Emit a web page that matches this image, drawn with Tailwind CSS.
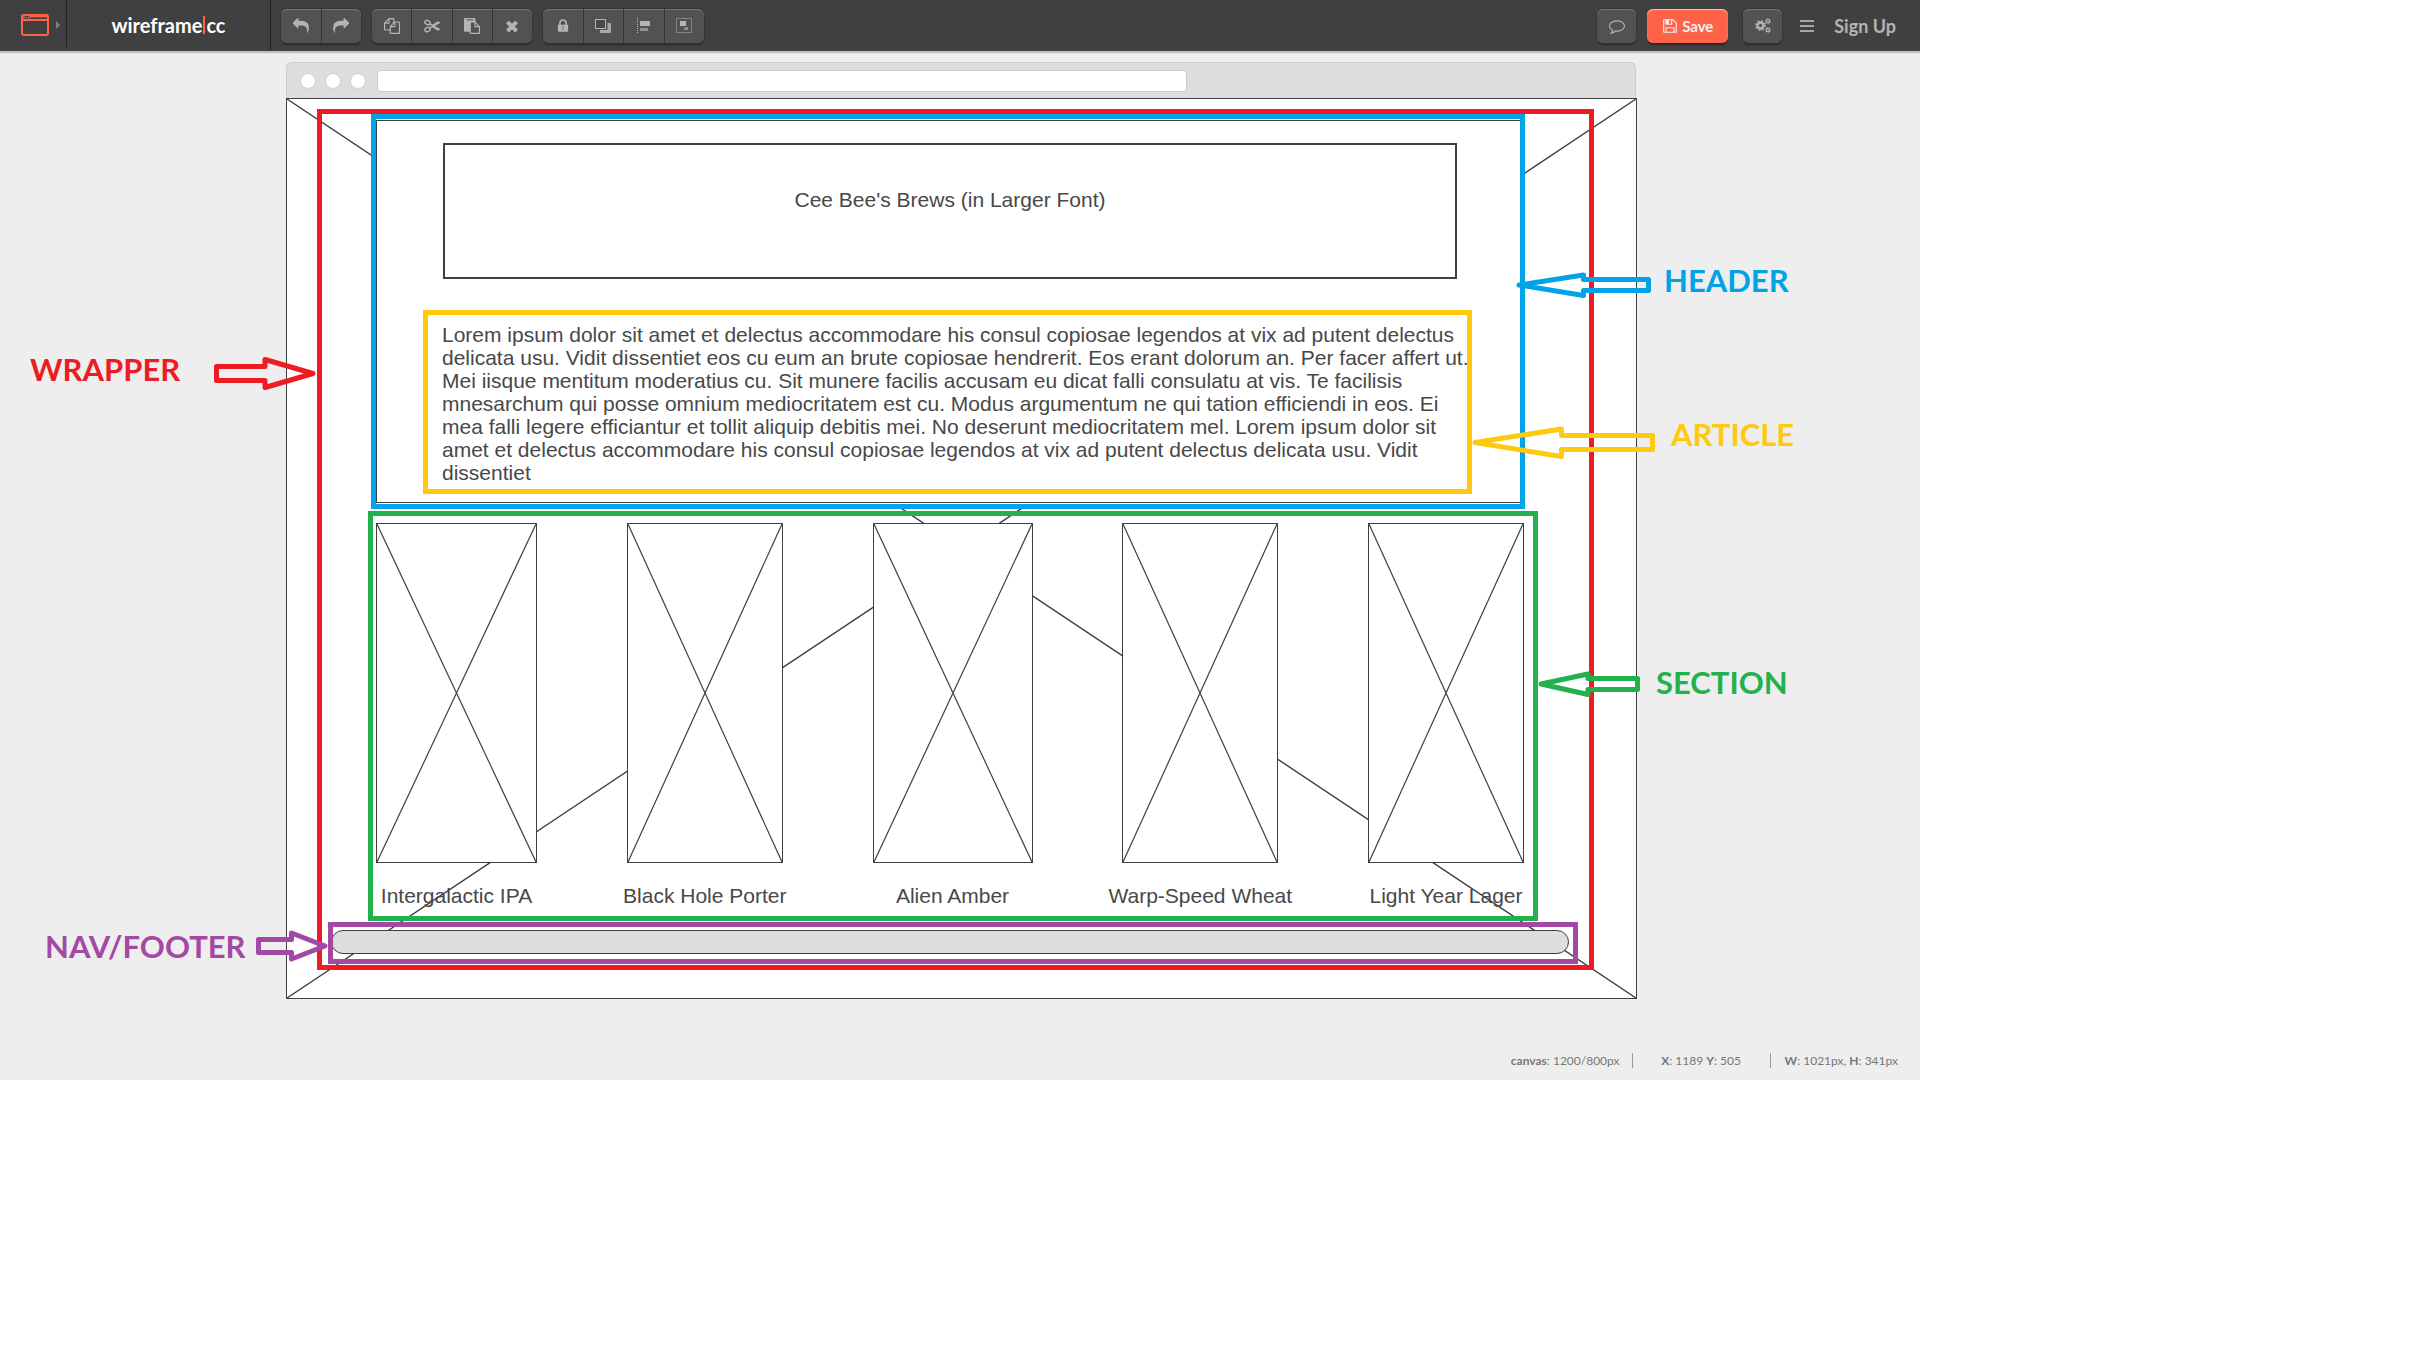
<!DOCTYPE html>
<html lang="en">
<head>
<meta charset="utf-8">
<meta name="viewport" content="width=device-width, initial-scale=1">
<title>wireframe|cc</title>
<script src="https://cdn.jsdelivr.net/npm/@tailwindcss/browser@4"></script>
</head>
<body class="bg-white font-['Lato',sans-serif]">
<div class="w-full max-w-[1920px] overflow-hidden bg-[#eeeeee] pb-3">

  <header class="flex h-[51px] items-start bg-[#404040] pr-6 shadow-[0_2px_1px_#c0c0c0]">
    <button type="button" aria-label="Canvas type" class="flex h-[47px] w-[67px] items-center gap-[7px] border-r border-[#222] pt-[3px] pl-[21px]">
      <svg class="h-[22px] w-[28px]" viewBox="0 0 28 22" fill="none" stroke="#ff6347" stroke-width="2"><rect x="1" y="1" width="26" height="20" rx="2"/><path d="M1 6h26"/><path d="M2 3.500h2M5 3.500h1M7 3.500h2" stroke-width="1.500"/><path d="M9 2.500h18" stroke-width="1.500"/></svg>
      <svg class="h-2 w-1" viewBox="0 0 4 8" fill="#808080"><path d="M0 0l4 4-4 4z"/></svg>
    </button>
    <a href="#" class="flex h-[50px] w-[204px] items-center justify-center border-r border-[#222] text-[20px] leading-[22px] font-bold text-white">wireframe<span class="mx-px h-[18px] w-[2px] bg-[#ff6347]"></span>cc</a>

    <div class="mt-[9px] ml-[10px] flex h-[34px] w-[80px] divide-x divide-[#333] rounded-md bg-[#525252] text-[#b4b4b4] shadow-[inset_0_1px_0_#777,0_0_0_1px_#363636,0_2px_1px_#292929]">
      <button type="button" aria-label="Undo" class="flex flex-1 items-center justify-center"><svg class="h-4 w-4" viewBox="0 0 1792 1792" fill="currentColor"><path d="M1792 1120q0 166-127 451-3 7-10.500 24t-13.500 30-13 22q-12 17-28 17-15 0-23.500-10t-8.500-25q0-9 2.500-26.500t2.500-23.500q5-68 5-123 0-112-19.500-200.500t-54-153.500-89-112-117.500-79.500-140-49-156-23-171-7.500h-224v256q0 26-19 45t-45 19-45-19l-512-512q-19-19-19-45t19-45l512-512q19-19 45-19t45 19 19 45v256h224q713 0 875 403 53 134 53 333z"/></svg></button>
      <button type="button" aria-label="Redo" class="flex flex-1 items-center justify-center"><svg class="h-4 w-4" viewBox="0 0 1792 1792" fill="currentColor"><path transform="matrix(-1 0 0 1 1792 0)" d="M1792 1120q0 166-127 451-3 7-10.500 24t-13.500 30-13 22q-12 17-28 17-15 0-23.500-10t-8.500-25q0-9 2.500-26.500t2.500-23.500q5-68 5-123 0-112-19.500-200.500t-54-153.500-89-112-117.500-79.500-140-49-156-23-171-7.500h-224v256q0 26-19 45t-45 19-45-19l-512-512q-19-19-19-45t19-45l512-512q19-19 45-19t45 19 19 45v256h224q713 0 875 403 53 134 53 333z"/></svg></button>
    </div>

    <div class="mt-[9px] ml-[11px] flex h-[34px] w-[160px] divide-x divide-[#333] rounded-md bg-[#525252] text-[#b4b4b4] shadow-[inset_0_1px_0_#777,0_0_0_1px_#363636,0_2px_1px_#292929]">
      <button type="button" aria-label="Copy" class="flex flex-1 items-center justify-center"><svg class="h-4 w-4" viewBox="0 0 1792 1792" fill="currentColor"><path d="M1696 384q40 0 68 28t28 68v1216q0 40-28 68t-68 28h-960q-40 0-68-28t-28-68v-288h-544q-40 0-68-28t-28-68v-672q0-40 20-88t48-76l408-408q28-28 76-48t88-20h416q40 0 68 28t28 68v328q68-40 128-40h416zm-544 213l-299 299h299v-299zm-640-384l-299 299h299v-299zm196 647l316-316v-416h-384v416q0 40-28 68t-68 28h-416v640h512v-256q0-40 20-88t48-76zm956 804v-1152h-384v416q0 40-28 68t-68 28h-416v640h896z"/></svg></button>
      <button type="button" aria-label="Cut" class="flex flex-1 items-center justify-center"><svg class="h-4 w-4" viewBox="0 0 16 16" fill="none" stroke="currentColor" stroke-width="1.500"><ellipse cx="3.500" cy="4.500" rx="2.700" ry="2" transform="rotate(25 3.500 4.500)"/><ellipse cx="3.500" cy="11.500" rx="2.700" ry="2" transform="rotate(-25 3.500 11.500)"/><path d="M5.800 5.800L8.500 7.500 14 4.200l1.200.5-9.400 5.500M8.500 8.500l5.500 3.300 1.200-.5-5.500-3.200"/></svg></button>
      <button type="button" aria-label="Paste" class="flex flex-1 items-center justify-center"><svg class="h-4 w-4" viewBox="0 0 1792 1792" fill="currentColor"><path d="M768 1664h896v-640h-416q-40 0-68-28t-28-68v-416h-384v1152zm256-1440v-64q0-13-9.500-22.500t-22.500-9.500h-704q-13 0-22.500 9.500t-9.500 22.500v64q0 13 9.500 22.500t22.500 9.500h704q13 0 22.500-9.500t9.500-22.500zm256 672h299l-299-299v299zm512 128v672q0 40-28 68t-68 28h-960q-40 0-68-28t-28-68v-160h-544q-40 0-68-28t-28-68v-1344q0-40 28-68t68-28h1088q40 0 68 28t28 68v328q21 13 36 28l408 408q28 28 48 76t20 88z"/></svg></button>
      <button type="button" aria-label="Delete" class="flex flex-1 items-center justify-center"><svg class="h-4 w-4" viewBox="0 0 1792 1792" fill="currentColor" stroke="currentColor" stroke-width="80"><path d="M1490 1322q0 40-28 68l-136 136q-28 28-68 28t-68-28l-294-294-294 294q-28 28-68 28t-68-28l-136-136q-28-28-28-68t28-68l294-294-294-294q-28-28-28-68t28-68l136-136q28-28 68-28t68 28l294 294 294-294q28-28 68-28t68 28l136 136q28 28 28 68t-28 68l-294 294 294 294q28 28 28 68z"/></svg></button>
    </div>

    <div class="mt-[9px] ml-[11px] flex h-[34px] w-[161px] divide-x divide-[#333] rounded-md bg-[#525252] text-[#b4b4b4] shadow-[inset_0_1px_0_#777,0_0_0_1px_#363636,0_2px_1px_#292929]">
      <button type="button" aria-label="Lock" class="flex flex-1 items-center justify-center"><svg class="h-4 w-4" viewBox="0 0 1792 1792" fill="currentColor"><path d="M640 768h512v-192q0-106-75-181t-181-75-181 75-75 181v192zm832 96v576q0 40-28 68t-68 28h-960q-40 0-68-28t-28-68v-576q0-40 28-68t68-28h32v-192q0-184 132-316t316-132 316 132 132 316v192h32q40 0 68 28t28 68z"/><path d="M850 900h100v160h-100zM850 1160h100v180h-100z" fill="#525252"/></svg></button>
      <button type="button" aria-label="Arrange" class="flex flex-1 items-center justify-center"><svg class="h-4 w-4" viewBox="0 0 16 16"><path d="M12.500 5H16v10H5v-3h7.500z" fill="#a8a8a8"/><rect x=".5" y="1.500" width="10" height="9" fill="#484848" stroke="#b4b4b4"/></svg></button>
      <button type="button" aria-label="Align" class="flex flex-1 items-center justify-center"><svg class="h-4 w-4" viewBox="0 0 16 16"><path d="M1.500 0v16" stroke="#b4b4b4" stroke-dasharray="1 1"/><path d="M4 3h10v5H4z" fill="#b4b4b4"/><path d="M4 10h8v3H4z" fill="#929292"/></svg></button>
      <button type="button" aria-label="Group" class="flex flex-1 items-center justify-center"><svg class="h-4 w-4" viewBox="0 0 16 16"><rect x=".5" y=".5" width="15" height="14" fill="none" stroke="#b4b4b4" stroke-dasharray="1 1"/><path d="M4 3h6v5H4z" fill="#b4b4b4"/><path d="M8 10h2V9h2v3H8z" fill="#929292"/></svg></button>
    </div>

    <div class="mt-[9px] ml-auto flex h-[34px] items-center text-[#b4b4b4]">
      <button type="button" aria-label="Comments" class="flex h-[34px] w-[39px] items-center justify-center rounded-md bg-[#525252] shadow-[inset_0_1px_0_#777,0_0_0_1px_#363636,0_2px_1px_#292929]"><svg class="h-4 w-4" viewBox="0 0 1792 1792" fill="currentColor"><path d="M896 384q-204 0-381.500 69.500t-282 187.500-104.500 255q0 112 71.500 213.500t201.500 175.500l87 50-27 96q-24 91-70 172 152-63 275-171l43-38 57 6q69 8 130 8 204 0 381.500-69.500t282-187.500 104.500-255-104.500-255-282-187.500-381.500-69.500zm896 512q0 174-120 321.500t-326 233-450 85.500q-70 0-145-8-198 175-460 242-49 14-114 22h-5q-15 0-27-10.500t-16-27.500v-1q-3-4-.5-12t2-10 4.500-9.500l6-9 7-8.500 8-9q7-8 31-34.500t34.500-38 31-39.500 32.500-51 27-59 26-76q-157-89-247.500-220t-90.500-281q0-174 120-321.500t326-233 450-85.500 450 85.500 326 233 120 321.500z"/></svg></button>
      <button type="button" class="ml-[11px] flex h-[34px] w-[81px] items-center justify-center gap-1 rounded-md bg-[#ff6347] text-[15px] leading-5 font-bold text-[#f0f0f0] shadow-[inset_0_1px_1px_#ffc0b0,0_2px_1px_#292929]"><svg class="h-4 w-4" viewBox="0 0 1792 1792" fill="currentColor"><path d="M512 1536h768v-384h-768v384zm896 0h128v-896q0-14-10-38.500t-20-34.500l-281-281q-10-10-34-20t-39-10v416q0 40-28 68t-68 28h-576q-40 0-68-28t-28-68v-416h-128v1280h128v-416q0-40 28-68t68-28h832q40 0 68 28t28 68v416zm-384-928v-320q0-13-9.500-22.500t-22.500-9.500h-192q-13 0-22.500 9.500t-9.500 22.500v320q0 13 9.500 22.500t22.500 9.500h192q13 0 22.500-9.500t9.500-22.500zm640 32v928q0 40-28 68t-68 28h-1344q-40 0-68-28t-28-68v-1344q0-40 28-68t68-28h928q40 0 88 20t76 48l280 280q28 28 48 76t20 88z"/></svg>Save</button>
      <button type="button" aria-label="Settings" class="ml-[15px] flex h-[34px] w-[39px] items-center justify-center rounded-md bg-[#525252] shadow-[inset_0_1px_0_#777,0_0_0_1px_#363636,0_2px_1px_#292929]"><svg class="h-4 w-4" viewBox="0 0 16 16" fill="none" stroke="currentColor"><circle cx="5.500" cy="7.500" r="3" stroke-width="2.400"/><circle cx="5.500" cy="7.500" r="4.700" stroke-width="1.400" stroke-dasharray="1.850 1.850"/><circle cx="13" cy="3.200" r="1.600" stroke-width="1.300"/><circle cx="13" cy="3.200" r="2.600" stroke-width=".8" stroke-dasharray="1.400 1.300"/><circle cx="13" cy="12" r="1.600" stroke-width="1.300"/><circle cx="13" cy="12" r="2.600" stroke-width=".8" stroke-dasharray="1.400 1.300"/></svg></button>
      <button type="button" aria-label="Menu" class="ml-[18px] flex w-[14px] flex-col gap-[3px]"><span class="h-[2px] bg-[#a8a8a8]"></span><span class="h-[2px] bg-[#a8a8a8]"></span><span class="h-[2px] bg-[#a8a8a8]"></span></button>
      <a href="#" class="ml-5 text-[18px] leading-6 font-bold">Sign Up</a>
    </div>
  </header>

  <main class="pt-[11px] pl-[3px]">
    <div class="relative mx-auto w-[1351px]">
      <div class="mr-px flex h-9 items-center gap-[9px] rounded-t-md border border-b-0 border-[#cccccc] bg-[#dddddd] pl-[13px]">
        <span class="h-4 w-4 rounded-full border border-[#d0d0d0] bg-white"></span>
        <span class="h-4 w-4 rounded-full border border-[#d0d0d0] bg-white"></span>
        <span class="h-4 w-4 rounded-full border border-[#d0d0d0] bg-white"></span>
        <input type="text" aria-label="Address" class="ml-[2px] h-[22px] w-[810px] rounded-sm border border-[#cccccc] bg-white px-2">
      </div>

      <div class="relative h-[901px] border border-[#404040] bg-white pt-[10px] pl-[30px] font-['Liberation_Sans',sans-serif] text-[21px] leading-[23px] text-[#484848]">
        <svg class="absolute inset-0 h-full w-full" viewBox="0 0 100 100" preserveAspectRatio="none" stroke="#404040" stroke-width="1.400" fill="none"><path d="M0 0L100 100M100 0L0 100" vector-effect="non-scaling-stroke"/></svg>

        <div class="relative w-[1277px] border-5 border-[#ed1c24] pb-px">
          <div class="ml-[49px] h-[395px] w-[1154px] border-5 border-[#00a2e8] bg-white py-px">
            <div class="h-full border border-r-0 border-[#404040]">
              <h1 class="mt-[22px] ml-[66px] flex h-[136px] w-[1014px] justify-center border-2 border-[#404040] pt-[43px]">Cee Bee's Brews (in Larger Font)</h1>
              <p class="mt-[31px] ml-[46px] h-[184px] w-[1049px] border-5 border-[#ffc90e] pt-2 pl-[14px] whitespace-nowrap">Lorem ipsum dolor sit amet et delectus accommodare his consul copiosae legendos at vix ad putent delectus<br>delicata usu. Vidit dissentiet eos cu eum an brute copiosae hendrerit. Eos erant dolorum an. Per facer affert ut.<br>Mei iisque mentitum moderatius cu. Sit munere facilis accusam eu dicat falli consulatu at vis. Te facilisis<br>mnesarchum qui posse omnium mediocritatem est cu. Modus argumentum ne qui tation efficiendi in eos. Ei<br>mea falli legere efficiantur et tollit aliquip debitis mei. No deserunt mediocritatem mel. Lorem ipsum dolor sit<br>amet et delectus accommodare his consul copiosae legendos at vix ad putent delectus delicata usu. Vidit<br>dissentiet</p>
            </div>
          </div>

          <section class="mt-[2px] ml-[46px] flex h-[410px] w-[1170px] justify-between border-5 border-[#22b14c] pt-[7px] pr-[9px] pl-[3px] whitespace-nowrap">
            <figure class="flex w-[161px] flex-col items-center gap-[21px]">
              <svg class="h-[340px] w-full border border-[#404040] bg-white" viewBox="0 0 100 100" preserveAspectRatio="none" stroke="#404040" stroke-width="1.200"><path d="M0 0L100 100M100 0L0 100" vector-effect="non-scaling-stroke"/></svg>
              <figcaption>Intergalactic IPA</figcaption>
            </figure>
            <figure class="flex w-[156px] flex-col items-center gap-[21px]">
              <svg class="h-[340px] w-full border border-[#404040] bg-white" viewBox="0 0 100 100" preserveAspectRatio="none" stroke="#404040" stroke-width="1.200"><path d="M0 0L100 100M100 0L0 100" vector-effect="non-scaling-stroke"/></svg>
              <figcaption>Black Hole Porter</figcaption>
            </figure>
            <figure class="flex w-[160px] flex-col items-center gap-[21px]">
              <svg class="h-[340px] w-full border border-[#404040] bg-white" viewBox="0 0 100 100" preserveAspectRatio="none" stroke="#404040" stroke-width="1.200"><path d="M0 0L100 100M100 0L0 100" vector-effect="non-scaling-stroke"/></svg>
              <figcaption>Alien Amber</figcaption>
            </figure>
            <figure class="flex w-[156px] flex-col items-center gap-[21px]">
              <svg class="h-[340px] w-full border border-[#404040] bg-white" viewBox="0 0 100 100" preserveAspectRatio="none" stroke="#404040" stroke-width="1.200"><path d="M0 0L100 100M100 0L0 100" vector-effect="non-scaling-stroke"/></svg>
              <figcaption>Warp-Speed Wheat</figcaption>
            </figure>
            <figure class="flex w-[156px] flex-col items-center gap-[21px]">
              <svg class="h-[340px] w-full border border-[#404040] bg-white" viewBox="0 0 100 100" preserveAspectRatio="none" stroke="#404040" stroke-width="1.200"><path d="M0 0L100 100M100 0L0 100" vector-effect="non-scaling-stroke"/></svg>
              <figcaption>Light Year Lager</figcaption>
            </figure>
          </section>

          <div class="mt-px ml-[6px] h-[42px] w-[1250px] border-5 border-[#a349a4] pt-[3px] pr-1">
            <div class="-ml-[2px] h-6 rounded-full border border-[#404040] bg-[#dddddd] [clip-path:inset(0_0_0_2px)]"></div>
          </div>
        </div>
      </div>

      <!-- Callout arrows and names laid over the canvas -->
      <svg class="pointer-events-none absolute top-0 left-0 h-[937px] w-[1351px] overflow-visible" viewBox="286 62 1351 937" fill="none" stroke-width="5" stroke-linejoin="round">
        <path stroke="#ed1c24" d="M216.500 366.500H265V359.500L313 373.500 265 387.500V380.500H216.500z"/>
        <path stroke="#00a2e8" d="M1648.500 279.500H1583.500V275L1519 285 1583.500 295.500V290.500H1648.500z"/>
        <path stroke="#ffc90e" d="M1652.500 435.500H1561.500V429L1475 442.500 1561.500 456.500V449.500H1652.500z"/>
        <path stroke="#22b14c" d="M1637.500 678.500H1588V674L1541 684 1588 694.500V689.500H1637.500z"/>
        <path stroke="#a349a4" d="M258.500 939.500H291.500V933L325 946 291.500 959V952.500H258.500z"/>
      </svg>
      <div class="text-[31px] leading-8 font-bold whitespace-nowrap">
        <span class="absolute top-[291px] -left-[256px] text-[#ed1c24]">WRAPPER</span>
        <span class="absolute top-[202px] left-[1378px] text-[#00a2e8]">HEADER</span>
        <span class="absolute top-[356px] left-[1385px] text-[#ffc90e]">ARTICLE</span>
        <span class="absolute top-[604px] left-[1370px] text-[#22b14c]">SECTION</span>
        <span class="absolute top-[868px] -left-[241px] text-[#a349a4]">NAV/FOOTER</span>
      </div>
    </div>
  </main>

  <footer class="mt-[54px] flex h-[15px] items-center justify-end pr-[22px] text-xs leading-[15px] text-[#777]">
    <span class="pr-3"><b>canvas</b>: 1200/800px</span>
    <span class="flex w-[139px] justify-center border-x border-[#999]"><span><b>X</b>: 1189 <b>Y</b>: 505</span></span>
    <span class="pl-[14px]"><b>W</b>: 1021px, <b>H</b>: 341px</span>
  </footer>
</div>
</body>
</html>
